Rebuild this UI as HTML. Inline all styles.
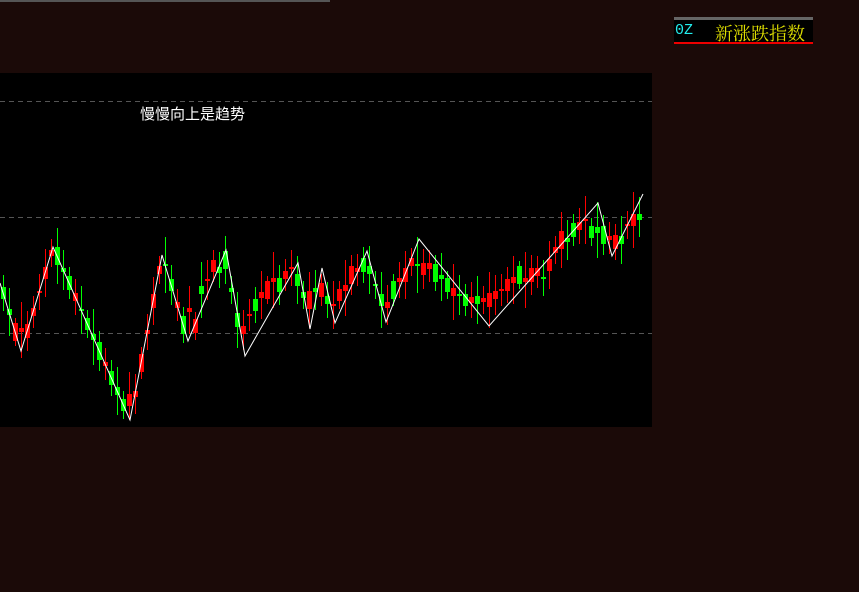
<!DOCTYPE html>
<html><head><meta charset="utf-8"><style>
html,body{margin:0;padding:0;background:#1b0a08;width:859px;height:592px;overflow:hidden;font-family:"Liberation Sans","Noto Sans CJK SC",sans-serif}
#chart{position:absolute;left:0;top:73px;width:652px;height:354px;background:#000}
#title{position:absolute;left:140px;top:103px;color:#fff;font-size:15px}
#topbar{position:absolute;left:0;top:0;width:330px;height:2px;background:#555}
#box{position:absolute;left:674px;top:17px;width:139px;height:27px;background:#000}
#box .t{position:absolute;left:0;top:0;width:139px;height:3px;background:#666}
#box .r{position:absolute;left:0;bottom:0;width:139px;height:2px;background:#e00}
#box .a{position:absolute;left:1px;top:5px;color:#2ee;font-size:15px;font-family:"Liberation Mono",monospace}
#box .b{position:absolute;left:41px;top:3px;color:#dd0;font-size:18px;font-family:"Liberation Serif","Noto Serif CJK SC",serif}
</style></head><body>
<div id="topbar"></div>
<div id="chart"><svg width="652" height="354" viewBox="0 73 652 354" style="display:block" shape-rendering="crispEdges">
<line x1="0" y1="101.5" x2="652" y2="101.5" stroke="#555" stroke-dasharray="5,4"/>
<line x1="0" y1="217.5" x2="652" y2="217.5" stroke="#555" stroke-dasharray="5,4"/>
<line x1="0" y1="333.5" x2="652" y2="333.5" stroke="#555" stroke-dasharray="5,4"/>
<path fill="none" stroke="#00ff00" stroke-width="1" d="M3.5 275V311M9.5 288V336M57.5 228V284M63.5 250V290M69.5 267V299M81.5 286V334M87.5 310V338M93.5 309V365M99.5 331V371M111.5 360V396M117.5 367V415M123.5 391V419M165.5 237V293M171.5 265V305M183.5 307V343M201.5 262V318M219.5 252V288M225.5 236V284M231.5 276V304M237.5 292V348M255.5 287V323M279.5 265V305M297.5 256V304M303.5 281V309M315.5 270V310M327.5 282V318M363.5 247V283M369.5 246V294M375.5 271V299M381.5 272V328M393.5 274V306M417.5 237V293M435.5 255V291M441.5 253V301M447.5 271V299M459.5 275V315M465.5 284V316M477.5 276V324M519.5 261V289M543.5 260V296M567.5 220V260M573.5 214V246M591.5 218V246M597.5 202V258M603.5 215V255M621.5 216V264M639.5 197V237"/>
<path fill="none" stroke="#00ff00" stroke-width="5" d="M3.5 287V299M9.5 309V315M57.5 247V265M63.5 268V272M69.5 276V290M81.5 309V311M87.5 318V330M93.5 334V340M99.5 342V360M111.5 371V385M117.5 387V395M123.5 399V411M165.5 264V266M171.5 279V291M183.5 316V334M201.5 286V294M219.5 267V273M225.5 251V269M231.5 288V292M237.5 313V327M255.5 299V311M279.5 278V292M297.5 274V286M303.5 292V298M315.5 288V292M327.5 296V304M363.5 258V272M369.5 266V274M375.5 284V286M381.5 294V306M393.5 281V299M417.5 264V266M435.5 264V282M441.5 275V279M447.5 278V292M459.5 294V296M465.5 294V306M477.5 296V304M519.5 266V284M543.5 277V279M567.5 238V242M573.5 223V237M591.5 226V238M597.5 227V233M603.5 226V244M621.5 236V244M639.5 214V220"/>
<path fill="none" stroke="#ff0000" stroke-width="1" d="M15.5 318V346M21.5 302V358M27.5 311V351M33.5 296V328M39.5 274V310M45.5 249V297M51.5 239V267M75.5 279V315M105.5 348V380M129.5 372V420M135.5 374V414M141.5 347V379M147.5 314V350M153.5 277V325M159.5 256V284M177.5 289V321M189.5 286V334M195.5 312V340M207.5 260V300M213.5 250V282M243.5 310V350M249.5 299V331M261.5 271V319M267.5 276V304M273.5 252V308M285.5 259V291M291.5 250V286M309.5 272V328M321.5 274V306M333.5 281V329M339.5 281V309M345.5 260V316M351.5 255V295M357.5 254V286M387.5 285V325M399.5 262V298M405.5 251V299M411.5 248V276M423.5 249V289M429.5 250V282M453.5 264V320M471.5 282V318M483.5 286V314M489.5 272V328M495.5 275V315M501.5 274V306M507.5 267V303M513.5 256V304M525.5 252V308M531.5 255V295M537.5 256V288M549.5 241V289M555.5 236V264M561.5 212V268M579.5 208V244M585.5 196V244M609.5 222V254M615.5 224V260M627.5 211V239M633.5 192V248"/>
<path fill="none" stroke="#ff0000" stroke-width="5" d="M15.5 323V341M21.5 328V332M27.5 324V338M33.5 308V316M39.5 291V293M45.5 267V279M51.5 250V256M75.5 293V301M105.5 362V366M129.5 394V406M135.5 391V397M141.5 354V372M147.5 330V334M153.5 294V308M159.5 266V274M177.5 302V308M189.5 308V312M195.5 319V333M207.5 279V281M213.5 260V272M243.5 326V334M249.5 314V316M261.5 292V298M267.5 281V299M273.5 278V282M285.5 271V279M291.5 267V269M309.5 291V309M321.5 283V297M333.5 304V306M339.5 289V301M345.5 285V291M351.5 266V284M357.5 268V272M387.5 302V308M399.5 278V282M405.5 268V282M411.5 258V266M423.5 263V275M429.5 263V269M453.5 288V296M471.5 297V303M483.5 298V302M489.5 293V307M495.5 291V299M501.5 289V291M507.5 279V291M513.5 277V283M525.5 278V282M531.5 268V282M537.5 268V276M549.5 259V271M555.5 247V253M561.5 231V249M579.5 222V230M585.5 219V221M609.5 236V240M615.5 235V249M627.5 224V226M633.5 214V226"/>
<polyline fill="none" stroke="#fff" stroke-width="1" shape-rendering="auto" points="0,283 21,351 53,247 130,420 162,255 188,341 226,250 245,356 298,263 310,329 322,268 335,323 367,251 386,322 419,239 489,326 598,203 612,256 643,194"/>
</svg></div>
<div id="title">慢慢向上是趋势</div>
<div id="box"><div class="t"></div><div class="a">0Z</div><div class="b">新涨跌指数</div><div class="r"></div></div>
</body></html>
